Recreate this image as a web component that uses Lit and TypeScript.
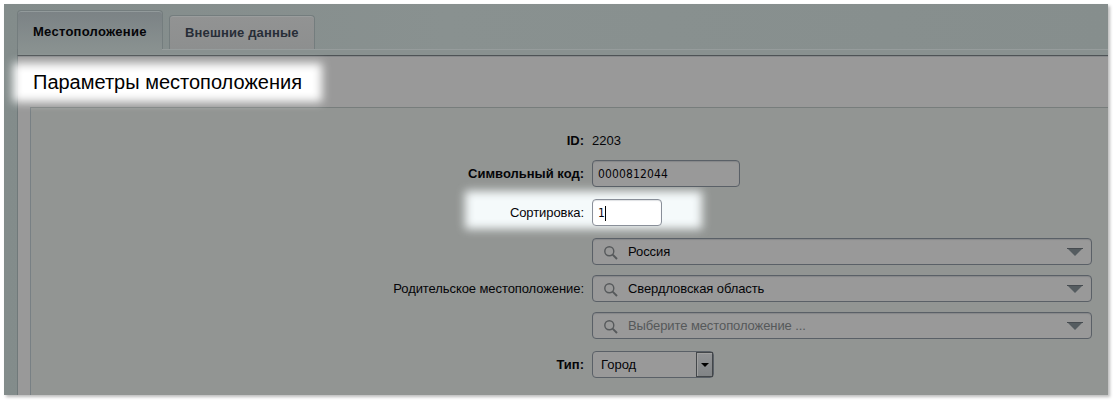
import { LitElement, html, css, svg } from 'lit';
import { customElement } from 'lit/decorators.js';

const lens = html`<svg class="lens" width="14" height="14" viewBox="0 0 14 14">
  ${svg`<circle cx="5.3" cy="5.3" r="4.5" fill="none" stroke="#56595b" stroke-width="1.4"/><path d="M8.6 8.6L13 13" stroke="#56595b" stroke-width="1.9"/>`}
</svg>`;
const arrow = html`<svg class="arrow" width="16" height="8" viewBox="0 0 16 8">
  ${svg`<path d="M0 0H16L8 8Z" fill="#555c60"/><path d="M0 .5H16" stroke="#464b50"/>`}
</svg>`;

@customElement('app-root')
export class AppRoot extends LitElement {
  static styles = css`
    :host { display: block; box-sizing: border-box; height: 400px; padding: 4px; background: #fff;
      font: 13px/15px "Liberation Sans", Arial, sans-serif; color: #050508; overflow: hidden; }
    * { box-sizing: border-box; }
    .window { position: relative; isolation: isolate; width: 1104px; height: 391px; padding-left: 13px;
      background: linear-gradient(90deg, #838c8b, #899190 40%, #868e8d); box-shadow: 2px 2px 3px #bbb; }
    .clip { position: absolute; inset: 0; overflow: hidden; z-index: 1; }
    .glow { position: absolute; filter: blur(5px); }
    .glow.title { left: 9px; top: 59px; width: 309px; height: 39px; background: #fff; }
    .glow.sort { left: 461px; top: 187px; width: 237px; height: 38px; background: #f5fafb; }
    .tabs { display: flex; align-items: flex-end; height: 45px; padding-top: 6px; position: relative; }
    .tab { font-weight: bold; border: 1px solid #747d7e; border-bottom: 0; border-radius: 4px 4px 0 0; white-space: nowrap; }
    .tab.on { letter-spacing: .27px; width: 146px; height: 39px; padding: 13px 0 0 15px; background: linear-gradient(#7b8285, #899190); box-shadow: inset 0 1px #929a9b; }
    .tab.off { letter-spacing: .15px; width: 146px; height: 34px; margin-left: 6px; padding: 9px 0 0 15px; background: linear-gradient(#929393, #8d8f8f); color: #272d37; box-shadow: inset 0 1px #9a9d9d; }
    .strip { height: 7px; background: #899190; border-left: 1px solid #70797a; border-bottom: 1px solid #4e5356; display: flex; }
    .strip i { flex: 1; margin-left: 144px; border-top: 1px solid #969c9c; }
    .panel { height: 339px; border-left: 1px solid #70797a; background: #999; padding-left: 12px; box-shadow: inset 0 1px #87898b; }
    h1 { position: relative; z-index: 2; margin: 0; height: 51px; padding: 14px 0 0 3px; font-size: 20px; line-height: 24px; font-weight: normal; color: #000; }
    .form { height: 288px; border-left: 1px solid #788084; border-top: 1px solid #777d7c; background: #929593; padding-top: 24px; }
    .grid { position: relative; z-index: 2; display: grid; grid-template-columns: 553px 500px; column-gap: 8px;
      grid-template-rows: 16px 27px 27px 101px 27px; row-gap: 12px; align-items: center; }
    .label { text-align: right; white-space: nowrap; }
    .label:not(.bold) { letter-spacing: -.08px; }
    .bold { font-weight: bold; }
    .field { height: 27px; border: 1px solid #5a6067; border-radius: 4px; background: #999; box-shadow: inset 0 1px 1px #858789;
      display: flex; align-items: center; padding-left: 5px; }
    .num { font: 12px/15px "DejaVu Sans Condensed", "DejaVu Sans", sans-serif; font-stretch: condensed; letter-spacing: .14px; padding-top: 2px; }
    .code { width: 148px; }
    .order { width: 70px; background: #fff; border-color: #898f99; box-shadow: inset 0 1px 1px #dfe2e4; }
    .caret { width: 1px; height: 15px; background: #000; }
    .stack { display: flex; flex-direction: column; gap: 10px; }
    .stack .field { padding: 0 8px 0 11px; }
    .lens { margin: 3px 10px 0 0; }
    .stack span { flex: 1; letter-spacing: -.09px; }
    .hint { color: #55585a; }
    .type { width: 122px; padding-left: 8px; justify-content: space-between; box-shadow: none; }
    .drop { width: 17px; height: 25px; border: 1px solid #43474a; background: linear-gradient(#929496, #818486); display: grid; place-items: center; box-shadow: inset 1px 1px #a0a0a0; }
  `;

  private place(name: string, empty = false) {
    return html`<div class="field">${lens}<span class=${empty ? 'hint' : ''}>${name}</span>${arrow}</div>`;
  }

  render() {
    return html`<div class="window">
      <div class="clip"><div class="glow title"></div><div class="glow sort"></div></div>
      <div class="tabs"><div class="tab on">Местоположение</div><div class="tab off">Внешние данные</div></div>
      <div class="strip"><i></i></div>
      <div class="panel">
        <h1>Параметры местоположения</h1>
        <div class="form"><div class="grid">
          <div class="label bold">ID:</div><div>2203</div>
          <div class="label bold">Символьный код:</div><div class="field num code">0000812044</div>
          <div class="label">Сортировка:</div><div class="field num order">1<span class="caret"></span></div>
          <div class="label">Родительское местоположение:</div>
          <div class="stack">${this.place('Россия')}${this.place('Свердловская область')}${this.place('Выберите местоположение ...', true)}</div>
          <div class="label bold">Тип:</div>
          <div class="field type">Город<div class="drop"><svg width="8" height="4" viewBox="0 0 8 4"><path d="M0 0H8L4 4Z"/></svg></div></div>
        </div></div>
      </div>
    </div>`;
  }
}
